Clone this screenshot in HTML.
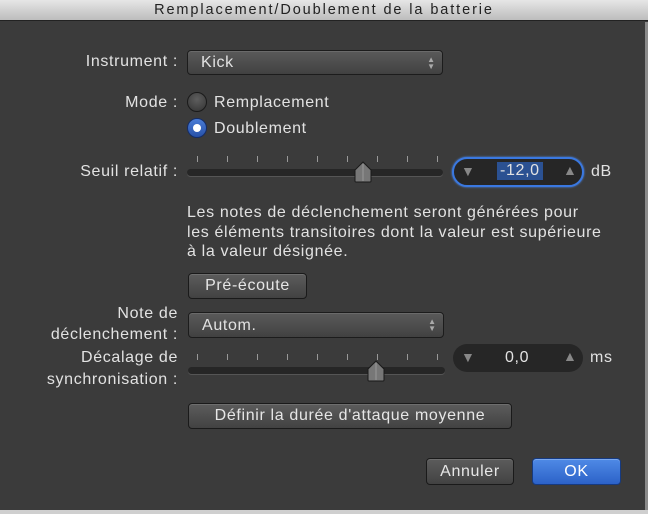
<!DOCTYPE html>
<html><head><meta charset="utf-8"><style>
*{margin:0;padding:0;box-sizing:border-box}
body{width:648px;height:514px;background:#3b3b3b;font-family:"Liberation Sans",sans-serif;color:#e2e2e2;position:relative;overflow:hidden;font-size:16px;letter-spacing:0.65px}
.a{position:absolute;white-space:nowrap}
.title{left:0;top:0;width:648px;height:21px;background:linear-gradient(#e6e6e6,#bdbdbd);border-bottom:1px solid #222;color:#222;font-size:14.5px;letter-spacing:1.9px;text-align:center;line-height:21px}
.r{text-align:right}
.pop{background:linear-gradient(#5a5a5a,#414141);border:1px solid #1c1c1c;border-radius:4px;box-shadow:inset 0 1px 0 #6a6a6a}
.btn{background:linear-gradient(#5c5c5c,#424242);border:1px solid #1a1a1a;border-radius:4px;box-shadow:inset 0 1px 0 #6e6e6e;text-align:center;color:#e6e6e6}
.arr{position:absolute;right:7px;top:50%;transform:translateY(-50%);font-size:8px;line-height:7px;color:#aaa;text-align:center;letter-spacing:0}
.track{height:7px;background:#262626;border-radius:4px;box-shadow:0 1px 0 #555}
.tick{position:absolute;width:1px;height:6px;background:#999}
.thumb{position:absolute;width:18px;height:22px}
.field{background:#262626;border-radius:15px}
.tri{position:absolute;font-size:14px;color:#888;letter-spacing:0}
</style></head><body>
<div class="a title">Remplacement/Doublement de la batterie</div>
<div style="position:absolute;left:645px;top:22px;width:3px;height:492px;background:#8a8a8a"></div>
<div style="position:absolute;left:0;top:510px;width:648px;height:4px;background:#cfcfcf"></div>

<div class="a r" style="right:470px;top:53px">Instrument :</div>
<div class="a pop" style="left:187px;top:50px;width:256px;height:25px"><span style="position:absolute;left:13px;top:3px">Kick</span><div class="arr">▲<br>▼</div></div>

<div class="a r" style="right:470px;top:94px">Mode :</div>
<div class="a" style="left:187px;top:92px;width:20px;height:20px;border-radius:50%;background:radial-gradient(circle at 50% 35%,#5e5e5e,#333);border:1px solid #1a1a1a"></div>
<div class="a" style="left:214px;top:94px">Remplacement</div>
<div class="a" style="left:187px;top:118px;width:20px;height:20px;border-radius:50%;background:linear-gradient(#4a7cd6,#2751a8);border:1px solid #142c66"></div>
<div class="a" style="left:193px;top:124px;width:8px;height:8px;border-radius:50%;background:#fff"></div>
<div class="a" style="left:214px;top:120px">Doublement</div>

<div class="a r" style="right:470px;top:163px">Seuil relatif :</div>
<div class="a track" style="left:187px;top:169px;width:256px"></div>
<div class="tick" style="left:197px;top:156px"></div><div class="tick" style="left:227px;top:156px"></div><div class="tick" style="left:257px;top:156px"></div><div class="tick" style="left:287px;top:156px"></div><div class="tick" style="left:317px;top:156px"></div><div class="tick" style="left:347px;top:156px"></div><div class="tick" style="left:377px;top:156px"></div><div class="tick" style="left:407px;top:156px"></div><div class="tick" style="left:437px;top:156px"></div>
<svg class="thumb" style="left:354px;top:161px" viewBox="0 0 18 22"><path d="M1 9 L9 1 L17 9 V20 Q17 21 16 21 H2 Q1 21 1 20 Z" fill="#777" stroke="#1a1a1a"/><line x1="9" y1="3" x2="9" y2="20" stroke="#999"/></svg>
<div class="a field" style="left:452px;top:157px;width:132px;height:30px;border:2px solid #3a78e0;box-shadow:0 0 2px #4d8cf0"></div>
<div class="tri" style="left:461px;top:163px">▼</div><div class="tri" style="left:563px;top:162px">▲</div>
<div class="a" style="left:497px;top:162px;background:#2b5192;padding:0 3px">-12,0</div>
<div class="a" style="left:591px;top:163px">dB</div>

<div class="a" style="left:187px;top:203px;line-height:19.5px">Les notes de déclenchement seront générées pour<br>les éléments transitoires dont la valeur est supérieure<br>à la valeur désignée.</div>

<div class="a btn" style="left:188px;top:273px;width:119px;height:26px;line-height:24px">Pré-écoute</div>

<div class="a r" style="right:470px;top:303px;line-height:21px;text-align:right">Note de<br>déclenchement :</div>
<div class="a pop" style="left:188px;top:312px;width:256px;height:26px"><span style="position:absolute;left:13px;top:4px">Autom.</span><div class="arr">▲<br>▼</div></div>

<div class="a r" style="right:470px;top:347px;line-height:22px;text-align:right">Décalage de<br>synchronisation :</div>
<div class="a track" style="left:188px;top:367px;width:257px"></div>
<div class="tick" style="left:197px;top:354px"></div><div class="tick" style="left:227px;top:354px"></div><div class="tick" style="left:257px;top:354px"></div><div class="tick" style="left:287px;top:354px"></div><div class="tick" style="left:317px;top:354px"></div><div class="tick" style="left:347px;top:354px"></div><div class="tick" style="left:377px;top:354px"></div><div class="tick" style="left:407px;top:354px"></div><div class="tick" style="left:437px;top:354px"></div>
<svg class="thumb" style="left:367px;top:360px" viewBox="0 0 18 22"><path d="M1 9 L9 1 L17 9 V20 Q17 21 16 21 H2 Q1 21 1 20 Z" fill="#777" stroke="#1a1a1a"/><line x1="9" y1="3" x2="9" y2="20" stroke="#999"/></svg>
<div class="a field" style="left:453px;top:344px;width:130px;height:28px"></div>
<div class="tri" style="left:461px;top:349px">▼</div><div class="tri" style="left:563px;top:348px">▲</div>
<div class="a" style="left:505px;top:349px">0,0</div>
<div class="a" style="left:590px;top:349px">ms</div>

<div class="a btn" style="left:188px;top:403px;width:324px;height:26px;line-height:24px">Définir la durée d'attaque moyenne</div>

<div class="a btn" style="left:426px;top:458px;width:88px;height:27px;line-height:25px">Annuler</div>
<div class="a btn" style="left:532px;top:458px;width:89px;height:27px;line-height:25px;background:linear-gradient(#4f8ae6,#2c62c8);border-color:#163a80;box-shadow:inset 0 1px 0 #7aa8f0;color:#fff">OK</div>
</body></html>
